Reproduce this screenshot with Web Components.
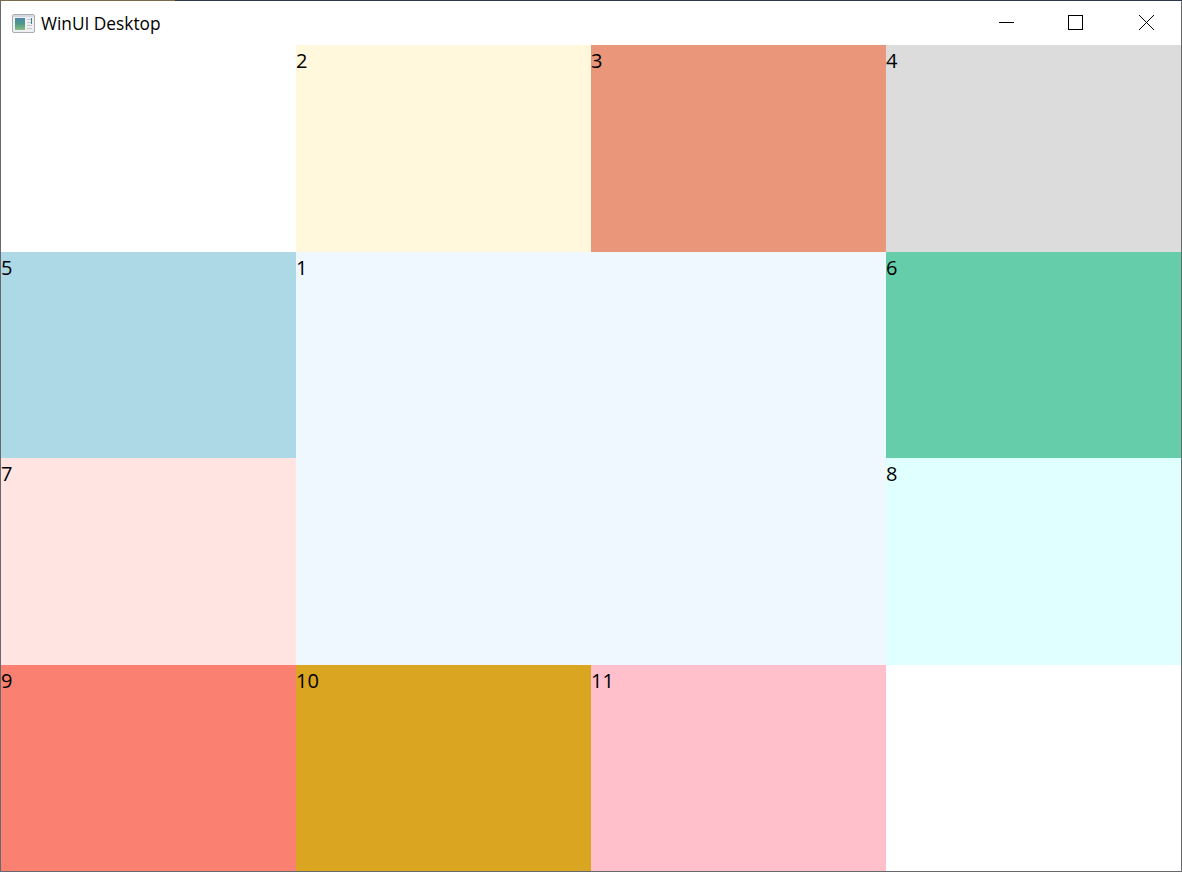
<!DOCTYPE html>
<html>
<head>
<meta charset="utf-8">
<title>WinUI Desktop</title>
<style>
  html, body { margin: 0; height: 100%; background: #fff; }
  body { font-family: "Open Sans", "Noto Sans", sans-serif; }
</style>
</head>
<body>
<win-window caption="WinUI Desktop">
  <grid-cell color="#ffffff"></grid-cell>
  <grid-cell color="#fff8dc">2</grid-cell>
  <grid-cell color="#e9967a">3</grid-cell>
  <grid-cell color="#dcdcdc">4</grid-cell>
  <grid-cell color="#add8e6">5</grid-cell>
  <grid-cell color="#f0f8ff" style="grid-row: span 2; grid-column: span 2">1</grid-cell>
  <grid-cell color="#66cdaa">6</grid-cell>
  <grid-cell color="#ffe4e1">7</grid-cell>
  <grid-cell color="#e0ffff">8</grid-cell>
  <grid-cell color="#fa8072">9</grid-cell>
  <grid-cell color="#daa520">10</grid-cell>
  <grid-cell color="#ffc0cb">11</grid-cell>
  <grid-cell color="#ffffff"></grid-cell>
</win-window>
<script>
class TitleBar extends HTMLElement {
  constructor() {
    super();
    this.attachShadow({ mode: 'open' });
  }

  connectedCallback() {
    const caption = this.getAttribute('caption') || '';
    this.shadowRoot.innerHTML = `
      <style>
        :host {
          display: flex;
          align-items: center;
          height: 44px;
          background: #fff;
          color: #000;
          font-size: 17.3px;
        }
        .icon { width: 23px; height: 19px; margin: 0 6px 0 11px; flex: none; }
        .caption { flex: 1; white-space: nowrap; }
        .buttons { display: flex; height: 100%; }
        .buttons div { width: 70px; display: flex; align-items: center; justify-content: center; }
        .buttons svg { width: 16px; height: 16px; }
      </style>
      <svg class="icon" viewBox="0 0 23 19">
        <defs>
          <linearGradient id="pane" x1="0" y1="0" x2="0" y2="1">
            <stop offset="0" stop-color="#4d86ad"/>
            <stop offset="0.5" stop-color="#4f9a86"/>
            <stop offset="1" stop-color="#8dbb84"/>
          </linearGradient>
        </defs>
        <rect x="0.5" y="0.5" width="22" height="18" rx="1.5" fill="#eef0f2" stroke="#a9acb0"/>
        <rect x="1" y="1" width="21" height="2" fill="#d5d8dc"/>
        <rect x="3" y="4" width="10" height="12" fill="url(#pane)"/>
        <path d="M15 5.5H19M15 8.5H19M15 11.5H20M15 14.5H20" stroke="#c4c8cc"/>
        <path d="M19.5 4V10" stroke="#3f7f8f"/>
      </svg>
      <span class="caption">${caption}</span>
      <div class="buttons">
        <div><svg viewBox="0 0 16 16"><path d="M1 7.5H16" stroke="#000" fill="none"/></svg></div>
        <div><svg viewBox="0 0 16 16"><rect x="0.5" y="0.5" width="14" height="14" stroke="#000" fill="none"/></svg></div>
        <div><svg viewBox="0 0 16 16" shape-rendering="crispEdges"><path d="M1 0L16 15M16 0L1 15" stroke="#000" fill="none"/></svg></div>
      </div>
    `;
  }
}

class WinWindow extends HTMLElement {
  constructor() {
    super();
    this.attachShadow({ mode: 'open' });
  }

  connectedCallback() {
    const caption = this.getAttribute('caption') || '';
    this.shadowRoot.innerHTML = `
      <style>
        :host {
          display: flex;
          flex-direction: column;
          box-sizing: border-box;
          height: 872px;
          border: 1px solid #66686c;
          border-top: 0;
          background: #fff;
        }
        /* desktop showing through the top edge */
        .edge {
          height: 1px;
          margin: 0 -1px;
          background: linear-gradient(to right, #7a6a48 0 175px, #2f3648 175px);
        }
        .content {
          flex: 1;
          display: grid;
          grid-template-columns: repeat(4, 1fr);
          grid-template-rows: repeat(4, 1fr);
          min-height: 0;
        }
      </style>
      <div class="edge"></div>
      <title-bar caption="${caption}"></title-bar>
      <div class="content"><slot></slot></div>
    `;
  }
}

class GridCell extends HTMLElement {
  constructor() {
    super();
    this.attachShadow({ mode: 'open' });
  }

  connectedCallback() {
    const color = this.getAttribute('color') || 'transparent';
    this.shadowRoot.innerHTML = `
      <style>
        :host {
          display: block;
          background: ${color};
          color: #000;
          font-size: 20px;
          line-height: 26px;
          padding-top: 3px;
        }
      </style>
      <slot></slot>
    `;
  }
}

customElements.define('title-bar', TitleBar);
customElements.define('win-window', WinWindow);
customElements.define('grid-cell', GridCell);
</script>
</body>
</html>
